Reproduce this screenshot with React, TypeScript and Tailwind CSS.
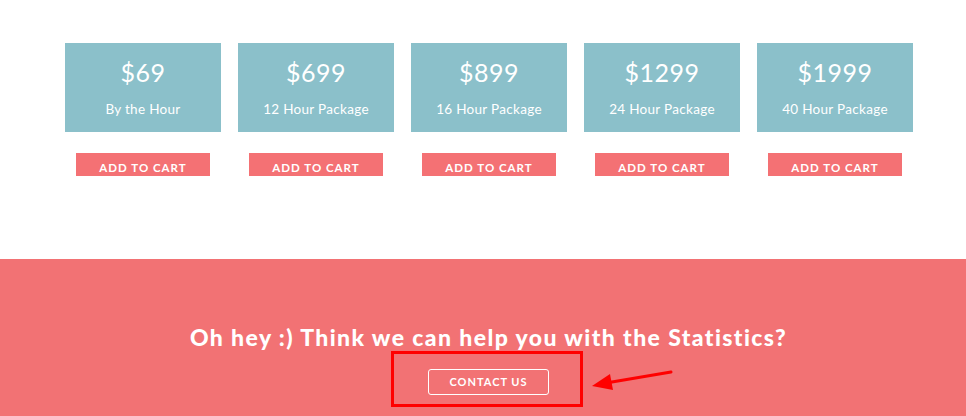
import React from "react";

const plans = [
  { price: "$69", label: "By the Hour" },
  { price: "$699", label: "12 Hour Package" },
  { price: "$899", label: "16 Hour Package" },
  { price: "$1299", label: "24 Hour Package" },
  { price: "$1999", label: "40 Hour Package" },
];

const font = { fontFamily: "Lato, 'Open Sans', sans-serif" };

export default function App() {
  return (
    <div className="w-full h-[416px] overflow-hidden bg-white" style={font}>
      <section className="h-[259px] pt-[43px] pl-[65px]">
        <div className="flex gap-[17px]">
          {plans.map((p) => (
            <div key={p.price} className="w-[156px] flex flex-col items-center">
              <div className="w-full h-[89px] bg-[#8bc0ca] text-white flex flex-col items-center pt-[14px]">
                <div className="text-[25px] leading-[30px] tracking-[0.5px]">{p.price}</div>
                <div className="text-[13.5px] leading-4 mt-[14px] tracking-[0.3px]">{p.label}</div>
              </div>
              <button className="mt-[21px] w-[134px] h-[23px] bg-[#f47174] text-white text-[11.5px] font-bold tracking-[1px] pt-[6px] leading-[17px]">
                ADD TO CART
              </button>
            </div>
          ))}
        </div>
      </section>

      <section className="relative h-[157px] bg-[#f27274] flex flex-col items-center pl-[11px] pt-[64px]">
        <h2 className="text-white text-[23px] font-black tracking-[1.4px] leading-[28px] whitespace-nowrap">
          Oh hey :) Think we can help you with the Statistics?
        </h2>
        <button className="mt-[18px] w-[121px] h-[26px] border border-white rounded-[3px] text-white text-[11px] font-bold tracking-[1px]">
          CONTACT US
        </button>

        <div className="absolute left-[391px] top-[92px] w-[192px] h-[56px] border-[3px] border-[#ff0000]" />
        <svg className="absolute left-0 top-0" width="966" height="157" viewBox="0 259 966 157">
          <line x1="671" y1="372" x2="606" y2="383" stroke="#ff0000" strokeWidth="3" strokeLinecap="round" />
          <polygon points="592,386 610,374 613,390" fill="#ff0000" />
        </svg>
      </section>
    </div>
  );
}
